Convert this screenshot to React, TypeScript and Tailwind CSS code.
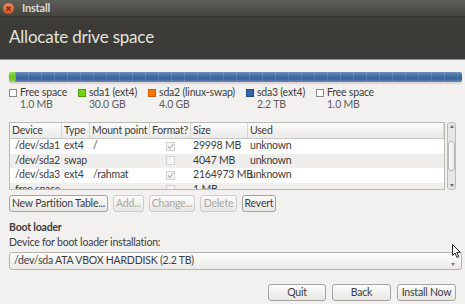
import { ReactNode } from "react";

const font = { fontFamily: '"Lato", "Open Sans", sans-serif', letterSpacing: "-0.2px" };

const rows = [
  { device: "/dev/sda1", type: "ext4", mount: "/", format: true, size: "29998 MB", used: "unknown" },
  { device: "/dev/sda2", type: "swap", mount: "", format: false, size: "4047 MB", used: "unknown" },
  { device: "/dev/sda3", type: "ext4", mount: "/rahmat", format: true, size: "2164973 MB", used: "unknown" },
  { device: "free space", type: "", mount: "", format: false, size: "1 MB", used: "" },
];

const legend = [
  { name: "Free space", size: "1.0 MB", swatch: "bg-white border-[#8a8a8a]" },
  { name: "sda1 (ext4)", size: "30.0 GB", swatch: "bg-[#73d216] border-[#4e9a06]" },
  { name: "sda2 (linux-swap)", size: "4.0 GB", swatch: "bg-[#f57900] border-[#ce5c00]" },
  { name: "sda3 (ext4)", size: "2.2 TB", swatch: "bg-[#3465a4] border-[#204a87]" },
  { name: "Free space", size: "1.0 MB", swatch: "bg-white border-[#8a8a8a]" },
];

const Btn = ({ children, disabled, className = "" }: { children: ReactNode; disabled?: boolean; className?: string }) => (
  <div
    className={`h-[17px] shrink-0 whitespace-nowrap flex items-center justify-center rounded-[3px] border bg-gradient-to-b from-[#fbfbfa] to-[#e8e7e5] text-[10.5px] ${
      disabled ? "border-[#cfcdc9] text-[#a9a7a3]" : "border-[#a8a59f] text-[#3c3c3c]"
    } ${className}`}
  >
    {children}
  </div>
);

const Check = ({ checked }: { checked: boolean }) => (
  <div className="w-[9px] h-[9px] border border-[#d3d1cd] bg-[#f5f5f4] flex items-center justify-center">
    {checked && (
      <svg width="7" height="7" viewBox="0 0 7 7">
        <path d="M1 3.5 L3 5.5 L6 1" stroke="#b8b6b2" strokeWidth="1.3" fill="none" />
      </svg>
    )}
  </div>
);

const cols = ["w-[52px]", "w-[28px]", "w-[60px]", "w-[41px]", "w-[57px]", "flex-1"];

export default function App() {
  return (
    <div className="w-[465px] h-[304px] bg-[#f2f1f0] relative overflow-hidden text-[#3c3c3c] whitespace-nowrap" style={font}>
      {/* Title bar */}
      <div className="h-[17px] bg-gradient-to-b from-[#5f5e59] to-[#45443f] border-b border-[#35342f] flex items-center px-[3px] gap-[8px]">
        <div className="w-[11px] h-[11px] rounded-full bg-gradient-to-b from-[#f58a5a] to-[#d64d1b] flex items-center justify-center">
          <svg width="5" height="5" viewBox="0 0 5 5">
            <path d="M0.5 0.5 L4.5 4.5 M4.5 0.5 L0.5 4.5" stroke="#5a2a14" strokeWidth="1.1" />
          </svg>
        </div>
        <span className="text-[11px] font-bold text-[#dfdbd2]">Install</span>
      </div>

      {/* Header */}
      <div className="h-[43px] bg-[#3c3b37] border-b border-[#8f8e8a] flex items-center px-[9px]">
        <span className="text-[17px] text-[#e4e4de] -mt-[2px]">Allocate drive space</span>
      </div>

      <div className="px-[9px] pt-[12px]">
        {/* Partition bar */}
        <div className="h-[10px] w-[453px] flex rounded-[2px] overflow-hidden shadow-[0_2px_2px_rgba(0,0,0,0.12)]">
          <div className="w-[6px] bg-gradient-to-b from-[#8ee04a] via-[#6cc31e] to-[#8ad84a]" />
          <div className="w-[1px] bg-[#f57900]" />
          <div className="flex-1 bg-[repeating-linear-gradient(90deg,transparent_0px,transparent_12px,rgba(255,255,255,0.12)_12px,rgba(255,255,255,0.12)_13px),linear-gradient(180deg,#6f8fc0_0%,#4670a8_35%,#3a629b_70%,#6888b8_100%)]" />
        </div>

        {/* Legend */}
        <div className="flex gap-[11px] mt-[5px] text-[10.5px] leading-[11px]">
          {legend.map((l, i) => (
            <div key={i} className="flex gap-[3px]">
              <div className={`w-[8px] h-[8px] border mt-[2px] ${l.swatch}`} />
              <div>
                <div className="text-[#3c3c3c]">{l.name}</div>
                <div className="text-[#5c5c5c] mt-[1px]">{l.size}</div>
              </div>
            </div>
          ))}
        </div>

        {/* Partition table */}
        <div className="flex mt-[12px] gap-[2px]">
          <div className="flex-1 h-[68px] border border-[#bcbab5] bg-white overflow-hidden text-[10.5px]">
            <div className="h-[16px] flex bg-gradient-to-b from-[#fbfbfa] to-[#ebeae8] border-b border-[#c9c7c3]">
              {["Device", "Type", "Mount point", "Format?", "Size", "Used"].map((h, i) => (
                <div key={h} className={`${cols[i]} shrink-0 px-[2px] flex items-center border-r border-[#d9d7d3] overflow-hidden`}>
                  {h}
                </div>
              ))}
            </div>
            {rows.map((r, i) => (
              <div key={i} className={`h-[14.5px] flex items-center ${i % 2 ? "bg-[#efeeed]" : "bg-white"}`}>
                <div className={`${cols[0]} shrink-0 pl-[5px]`}>{r.device}</div>
                <div className={`${cols[1]} shrink-0 pl-[2px]`}>{r.type}</div>
                <div className={`${cols[2]} shrink-0 pl-[3px]`}>{r.mount}</div>
                <div className={`${cols[3]} shrink-0 flex justify-center`}>
                  <Check checked={r.format} />
                </div>
                <div className={`${cols[4]} shrink-0 pl-[2px]`}>{r.size}</div>
                <div className={`${cols[5]} pl-[2px]`}>{r.used}</div>
              </div>
            ))}
          </div>
          {/* Scrollbar */}
          <div className="w-[9px] h-[68px] border border-[#bcbab5] rounded-[3px] bg-[#e6e5e3] flex flex-col items-center justify-between py-[2px]">
            <div className="w-0 h-0 border-l-[2px] border-r-[2px] border-b-[3px] border-l-transparent border-r-transparent border-b-[#6a6a6a]" />
            <div className="w-[7px] h-[30px] rounded-[3px] border border-[#b9b7b2] bg-gradient-to-r from-[#fafaf9] to-[#e9e8e6]" />
            <div className="w-0 h-0 border-l-[2px] border-r-[2px] border-t-[3px] border-l-transparent border-r-transparent border-t-[#6a6a6a]" />
          </div>
        </div>

        {/* Table buttons */}
        <div className="flex gap-[5px] mt-[5px]">
          <Btn className="w-[99px]">New Partition Table...</Btn>
          <Btn disabled className="w-[31px]">Add...</Btn>
          <Btn disabled className="w-[46px]">Change...</Btn>
          <Btn disabled className="w-[37px]">Delete</Btn>
          <Btn className="w-[34px]">Revert</Btn>
        </div>

        {/* Boot loader */}
        <div className="mt-[9px] text-[10.5px] leading-[13px] font-bold">Boot loader</div>
        <div className="mt-[2px] text-[10.5px] leading-[13px]">Device for boot loader installation:</div>
        <div className="mt-[3px] h-[18px] w-[453px] rounded-[3px] border border-[#b5b2ac] bg-gradient-to-b from-[#fdfdfd] to-[#ebeae8] flex items-center justify-between pl-[4px] pr-[6px] text-[10.5px]">
          <span>/dev/sda ATA VBOX HARDDISK (2.2 TB)</span>
          <div className="w-0 h-0 mt-[6px] border-l-[2px] border-r-[2px] border-t-[3px] border-l-transparent border-r-transparent border-t-[#7a7a7a]" />
        </div>

        {/* Footer */}
        <div className="flex justify-end gap-[6px] mt-[14px]">
          <Btn className="w-[58px]">Quit</Btn>
          <Btn className="w-[59px]">Back</Btn>
          <Btn className="w-[59px]">Install Now</Btn>
        </div>
      </div>

      {/* Mouse cursor */}
      <svg className="absolute left-[452px] top-[244px]" width="10" height="15" viewBox="0 0 10 15">
        <path d="M0.5 0.5 L0.5 11.5 L3 9 L5 13.5 L6.8 12.7 L4.8 8.3 L8.3 8.3 Z" fill="#f8f8f8" stroke="#222" strokeWidth="1" />
      </svg>
    </div>
  );
}
